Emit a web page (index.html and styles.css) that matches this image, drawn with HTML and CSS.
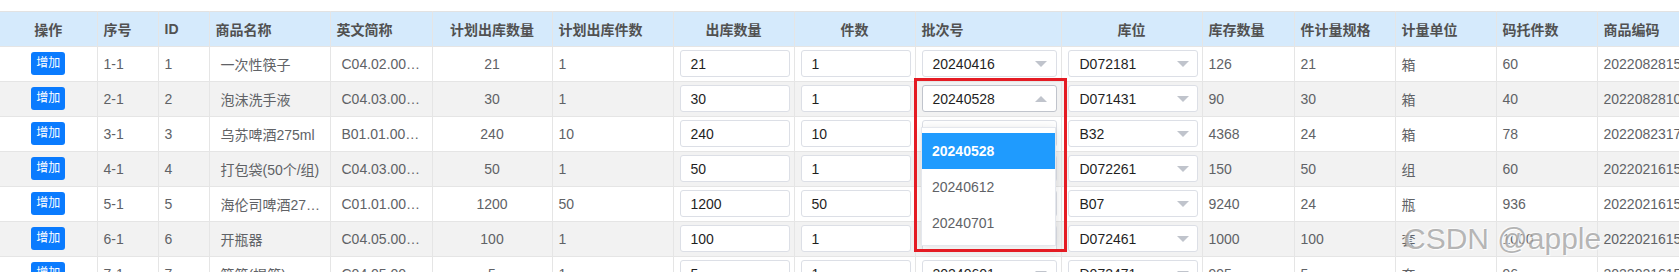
FILE: index.html
```html
<!DOCTYPE html>
<html lang="zh">
<head>
<meta charset="utf-8">
<link rel="stylesheet" href="styles.css">
</head>
<body>
<div class="wrap">
<table class="grid">
<colgroup>
<col class="c-op"><col class="c-seq"><col class="c-id"><col class="c-name"><col class="c-en"><col class="c-pq"><col class="c-pp"><col class="c-oq"><col class="c-op2"><col class="c-batch"><col class="c-loc"><col class="c-stock"><col class="c-spec"><col class="c-unit"><col class="c-pal"><col class="c-code">
</colgroup>
<thead>
<tr>
<th class="fixed center">操作</th><th>序号</th><th>ID</th><th>商品名称</th><th>英文简称</th><th class="center">计划出库数量</th><th>计划出库件数</th><th class="center">出库数量</th><th class="center">件数</th><th>批次号</th><th class="center">库位</th><th>库存数量</th><th>件计量规格</th><th>计量单位</th><th>码托件数</th><th>商品编码</th>
</tr>
</thead>
<tbody>
<tr>
<td class="fixed center"><span class="btn">增加</span></td><td>1-1</td><td>1</td><td class="pad">一次性筷子</td><td class="pad">C04.02.00…</td><td class="center">21</td><td>1</td>
<td><div class="input">21</div></td><td><div class="input">1</div></td>
<td><div class="select sb"><span>20240416</span><i class="arr"></i></div></td>
<td><div class="select sl"><span>D072181</span><i class="arr"></i></div></td>
<td>126</td><td>21</td><td>箱</td><td>60</td><td>2022082815</td>
</tr>
<tr class="alt">
<td class="fixed center"><span class="btn">增加</span></td><td>2-1</td><td>2</td><td class="pad">泡沫洗手液</td><td class="pad">C04.03.00…</td><td class="center">30</td><td>1</td>
<td><div class="input">30</div></td><td><div class="input">1</div></td>
<td><div class="select sb focus"><span>20240528</span><i class="arr up"></i></div></td>
<td><div class="select sl"><span>D071431</span><i class="arr"></i></div></td>
<td>90</td><td>30</td><td>箱</td><td>40</td><td>2022082810</td>
</tr>
<tr>
<td class="fixed center"><span class="btn">增加</span></td><td>3-1</td><td>3</td><td class="pad">乌苏啤酒275ml</td><td class="pad">B01.01.00…</td><td class="center">240</td><td>10</td>
<td><div class="input">240</div></td><td><div class="input">10</div></td>
<td><div class="select sb"><span>20240528</span><i class="arr"></i></div></td>
<td><div class="select sl"><span>B32</span><i class="arr"></i></div></td>
<td>4368</td><td>24</td><td>箱</td><td>78</td><td>2022082317</td>
</tr>
<tr class="alt">
<td class="fixed center"><span class="btn">增加</span></td><td>4-1</td><td>4</td><td class="pad">打包袋(50个/组)</td><td class="pad">C04.03.00…</td><td class="center">50</td><td>1</td>
<td><div class="input">50</div></td><td><div class="input">1</div></td>
<td><div class="select sb"><span>20240528</span><i class="arr"></i></div></td>
<td><div class="select sl"><span>D072261</span><i class="arr"></i></div></td>
<td>150</td><td>50</td><td>组</td><td>60</td><td>2022021615</td>
</tr>
<tr>
<td class="fixed center"><span class="btn">增加</span></td><td>5-1</td><td>5</td><td class="pad">海伦司啤酒27…</td><td class="pad">C01.01.00…</td><td class="center">1200</td><td>50</td>
<td><div class="input">1200</div></td><td><div class="input">50</div></td>
<td><div class="select sb"><span>20240528</span><i class="arr"></i></div></td>
<td><div class="select sl"><span>B07</span><i class="arr"></i></div></td>
<td>9240</td><td>24</td><td>瓶</td><td>936</td><td>2022021615</td>
</tr>
<tr class="alt">
<td class="fixed center"><span class="btn">增加</span></td><td>6-1</td><td>6</td><td class="pad">开瓶器</td><td class="pad">C04.05.00…</td><td class="center">100</td><td>1</td>
<td><div class="input">100</div></td><td><div class="input">1</div></td>
<td><div class="select sb"><span>20240528</span><i class="arr"></i></div></td>
<td><div class="select sl"><span>D072461</span><i class="arr"></i></div></td>
<td>1000</td><td>100</td><td>套</td><td>1000</td><td>2022021615</td>
</tr>
<tr>
<td class="fixed center"><span class="btn">增加</span></td><td>7-1</td><td>7</td><td class="pad">筷笼(提笼)</td><td class="pad">C04.05.00…</td><td class="center">5</td><td>1</td>
<td><div class="input">5</div></td><td><div class="input">1</div></td>
<td><div class="select sb"><span>20240601</span><i class="arr"></i></div></td>
<td><div class="select sl"><span>D072471</span><i class="arr"></i></div></td>
<td>995</td><td>5</td><td>套</td><td>96</td><td>2022021615</td>
</tr>
</tbody>
</table>

<div class="dropdown">
<div class="opt active">20240528</div>
<div class="opt">20240612</div>
<div class="opt">20240701</div>
</div>
<div class="highlight"></div>
<div class="watermark">CSDN @apple</div>
</div>
</body>
</html>
```

FILE: styles.css
```css
* { box-sizing: border-box; }
html, body { margin: 0; padding: 0; background: #fff; }
body {
  font-family: "Liberation Sans", Arial, "Noto Sans CJK SC", sans-serif;
  font-size: 14px;
  color: #606266;
}
.wrap {
  position: relative;
  width: 1679px;
  height: 272px;
  overflow: hidden;
  padding-top: 11px;
}
.grid {
  table-layout: fixed;
  border-collapse: collapse;
  width: 1717px;
}
.c-op { width: 97px; }
.c-seq { width: 61px; }
.c-id { width: 51px; }
.c-name { width: 121px; }
.c-en { width: 102px; }
.c-pq { width: 120px; }
.c-pp { width: 121px; }
.c-oq { width: 121px; }
.c-op2 { width: 121px; }
.c-batch { width: 146px; }
.c-loc { width: 141px; }
.c-stock { width: 92px; }
.c-spec { width: 101px; }
.c-unit { width: 101px; }
.c-pal { width: 101px; }
.c-code { width: 120px; }

tr { height: 35px; }
th, td {
  border: 1px solid #e5e5e5;
  padding: 0 6px;
  text-align: left;
  white-space: nowrap;
  overflow: hidden;
  vertical-align: middle;
}
th {
  background: #d5eafc;
  color: #515151;
  font-weight: bold;
  border-top-color: #e2e2e2;
}
th:first-child, td:first-child { border-left: none; }
td { background: #fff; }
tr.alt td { background: #f2f2f2; }
.center { text-align: center; }
td.pad { padding: 0 10px 0 11px; }
.fixed {
  position: relative;
  z-index: 1;
  box-shadow: 2px 0 5px rgba(0, 0, 0, 0.08);
}
.btn {
  display: inline-block;
  width: 34px;
  height: 23px;
  line-height: 23px;
  border-radius: 3px;
  background: #0a7bfe;
  color: #fff;
  font-size: 12px;
  text-align: center;
  vertical-align: middle;
  margin-top: -1px;
}
.input, .select {
  height: 27px;
  border: 1px solid #dcdfe6;
  border-radius: 3px;
  background: #fff;
  color: #1f1f1f;
  display: flex;
  align-items: center;
  margin-top: -1px;
}
.input { width: 110px; padding-left: 10px; }
.select { justify-content: space-between; }
.sb { width: 135px; padding: 0 9px 0 10px; }
.sl { width: 130px; padding: 0 8px 0 11px; }
.select.focus { border-color: #c0c4cc; }
.arr {
  width: 0;
  height: 0;
  border-left: 6px solid transparent;
  border-right: 6px solid transparent;
  border-top: 6px solid #c0c4cc;
}
.arr.up {
  border-top: none;
  border-bottom: 6px solid #c0c4cc;
}
.dropdown {
  position: absolute;
  left: 921px;
  top: 127px;
  width: 135px;
  height: 119px;
  background: #fff;
  border: 1px solid #e4e7ed;
  box-shadow: 0 2px 10px rgba(0, 0, 0, 0.12);
  padding-top: 5px;
  z-index: 3;
}
.opt {
  height: 36px;
  line-height: 36px;
  padding-left: 10px;
  color: #606266;
}
.opt.active {
  background: #1f9bfe;
  color: #fff;
  font-weight: bold;
}
.highlight {
  position: absolute;
  left: 914px;
  top: 78px;
  width: 153px;
  height: 174px;
  border: 3px solid #e41b23;
  z-index: 4;
}
.watermark {
  position: absolute;
  left: 1404px;
  top: 222px;
  font-size: 30px;
  color: rgba(110, 110, 110, 0.5);
  text-shadow: 1px 1px 1px rgba(255, 255, 255, 0.9), -1px -1px 1px rgba(255, 255, 255, 0.6);
  z-index: 5;
  white-space: nowrap;
}
```
